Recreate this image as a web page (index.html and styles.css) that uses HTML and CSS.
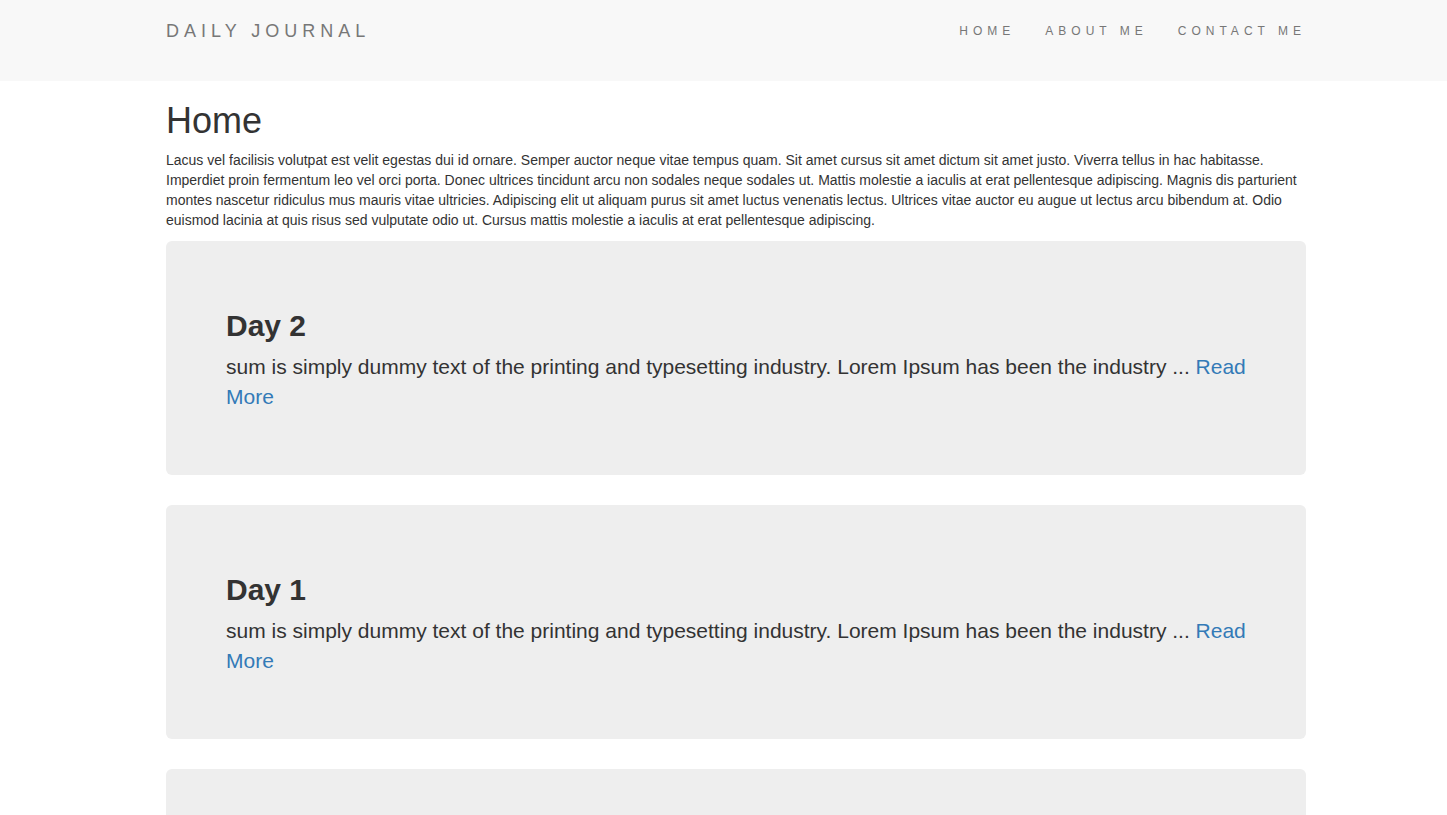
FILE: index.html
```html
<!DOCTYPE html>
<html lang="en">
<head>
<meta charset="utf-8">
<title>Daily Journal</title>
<link rel="stylesheet" href="styles.css">
</head>
<body>
<header class="navbar">
  <div class="container nav-inner">
    <a class="brand" href="#">DAILY JOURNAL</a>
    <nav class="nav-links">
      <a href="#">HOME</a>
      <a href="#">ABOUT ME</a>
      <a href="#">CONTACT ME</a>
    </nav>
  </div>
</header>
<main class="container">
  <h1 class="page-title">Home</h1>
  <p class="intro">Lacus vel facilisis volutpat est velit egestas dui id ornare. Semper auctor neque vitae tempus quam. Sit amet cursus sit amet dictum sit amet justo. Viverra tellus in hac habitasse. Imperdiet proin fermentum leo vel orci porta. Donec ultrices tincidunt arcu non sodales neque sodales ut. Mattis molestie a iaculis at erat pellentesque adipiscing. Magnis dis parturient montes nascetur ridiculus mus mauris vitae ultricies. Adipiscing elit ut aliquam purus sit amet luctus venenatis lectus. Ultrices vitae auctor eu augue ut lectus arcu bibendum at. Odio euismod lacinia at quis risus sed vulputate odio ut. Cursus mattis molestie a iaculis at erat pellentesque adipiscing.</p>

  <section class="jumbotron">
    <h2>Day 2</h2>
    <p>sum is simply dummy text of the printing and typesetting industry. Lorem Ipsum has been the industry ... <a href="#">Read More</a></p>
  </section>

  <section class="jumbotron">
    <h2>Day 1</h2>
    <p>sum is simply dummy text of the printing and typesetting industry. Lorem Ipsum has been the industry ... <a href="#">Read More</a></p>
  </section>

  <section class="jumbotron">
    <h2>Day 0</h2>
    <p>sum is simply dummy text of the printing and typesetting industry. Lorem Ipsum has been the industry ... <a href="#">Read More</a></p>
  </section>
</main>
</body>
</html>
```

FILE: styles.css
```css
* { box-sizing: border-box; }

body {
  margin: 0;
  font-family: "Liberation Sans", Arial, Helvetica, sans-serif;
  font-size: 14px;
  line-height: 1.42857;
  color: #333;
  background: #fff;
}

a { color: #337ab7; text-decoration: none; }

.container {
  width: 1140px;
  margin-left: 166px;
}

.navbar {
  background: #f8f8f8;
  height: 81px;
}

.nav-inner {
  display: flex;
  justify-content: space-between;
  align-items: flex-start;
  padding-top: 21px;
}

.brand {
  font-size: 18px;
  line-height: 20px;
  letter-spacing: 5px;
  color: #777;
}

.nav-links {
  display: flex;
  margin-right: -15px;
}

.nav-links a {
  font-size: 12px;
  line-height: 20px;
  letter-spacing: 5px;
  color: #777;
  padding: 0 15px;
}

.page-title {
  font-size: 36px;
  font-weight: 500;
  line-height: 1.1;
  margin: 20px 0 10px;
}

.intro {
  margin: 0 0 10px;
}

.jumbotron {
  background: #eee;
  border-radius: 6px;
  padding: 48px 60px;
  margin-bottom: 30px;
}

.jumbotron h2 {
  font-size: 30px;
  font-weight: 700;
  line-height: 1.1;
  margin: 20px 0 10px;
}

.jumbotron p {
  font-size: 21px;
  line-height: 30px;
  margin: 0 0 15px;
}
```
